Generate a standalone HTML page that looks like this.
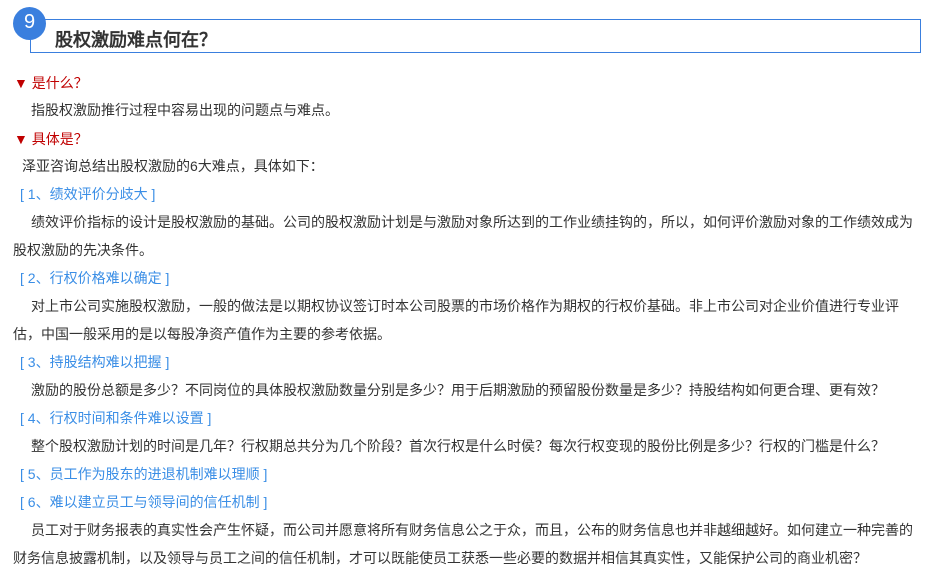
<!DOCTYPE html>
<html><head><meta charset="utf-8"><style>
body{margin:0;width:935px;height:571px;background:#fff;overflow:hidden;position:relative;font-family:"Liberation Sans","WenQuanYi Zen Hei",sans-serif;font-size:14px;color:#333}
.l{position:absolute;white-space:nowrap;line-height:20px}
.r{color:#c00000}.b{color:#3a8ee6}
.tri{font-family:"Liberation Sans","DejaVu Sans",sans-serif;font-size:14px}
.box{position:absolute;left:30px;top:19px;width:889px;height:32px;border:1.5px solid #3a7fde}
.c{position:absolute;left:13px;top:7px;width:33px;height:33px;border-radius:50%;background:#3a7fde;color:#fff;font-size:20px;text-align:center;line-height:31px;font-family:"Liberation Sans",sans-serif}
.t{position:absolute;left:55px;top:27px;font-size:18px;font-weight:bold;color:#333;white-space:nowrap;line-height:26px}
</style></head><body>
<div class="box"></div><div class="c">9</div>
<div class="t">股权激励难点何在？</div>
<div class="l r" style="left:14px;top:73px"><span class="tri">▼</span> 是什么？</div>
<div class="l" style="left:31px;top:100px">指股权激励推行过程中容易出现的问题点与难点。</div>
<div class="l r" style="left:14px;top:129px"><span class="tri">▼</span> 具体是？</div>
<div class="l" style="left:22px;top:156px">泽亚咨询总结出股权激励的6大难点，具体如下：</div>
<div class="l b" style="left:20px;top:184px">[ 1、绩效评价分歧大 ]</div>
<div class="l" style="left:31px;top:212px">绩效评价指标的设计是股权激励的基础。公司的股权激励计划是与激励对象所达到的工作业绩挂钩的，所以，如何评价激励对象的工作绩效成为</div>
<div class="l" style="left:13px;top:240px">股权激励的先决条件。</div>
<div class="l b" style="left:20px;top:268px">[ 2、行权价格难以确定 ]</div>
<div class="l" style="left:31px;top:296px">对上市公司实施股权激励，一般的做法是以期权协议签订时本公司股票的市场价格作为期权的行权价基础。非上市公司对企业价值进行专业评</div>
<div class="l" style="left:13px;top:324px">估，中国一般采用的是以每股净资产值作为主要的参考依据。</div>
<div class="l b" style="left:20px;top:352px">[ 3、持股结构难以把握 ]</div>
<div class="l" style="left:31px;top:380px">激励的股份总额是多少？不同岗位的具体股权激励数量分别是多少？用于后期激励的预留股份数量是多少？持股结构如何更合理、更有效？</div>
<div class="l b" style="left:20px;top:408px">[ 4、行权时间和条件难以设置 ]</div>
<div class="l" style="left:31px;top:436px">整个股权激励计划的时间是几年？行权期总共分为几个阶段？首次行权是什么时侯？每次行权变现的股份比例是多少？行权的门槛是什么？</div>
<div class="l b" style="left:20px;top:464px">[ 5、员工作为股东的进退机制难以理顺 ]</div>
<div class="l b" style="left:20px;top:492px">[ 6、难以建立员工与领导间的信任机制 ]</div>
<div class="l" style="left:31px;top:520px">员工对于财务报表的真实性会产生怀疑，而公司并愿意将所有财务信息公之于众，而且，公布的财务信息也并非越细越好。如何建立一种完善的</div>
<div class="l" style="left:13px;top:548px">财务信息披露机制，以及领导与员工之间的信任机制，才可以既能使员工获悉一些必要的数据并相信其真实性，又能保护公司的商业机密？</div>
</body></html>
